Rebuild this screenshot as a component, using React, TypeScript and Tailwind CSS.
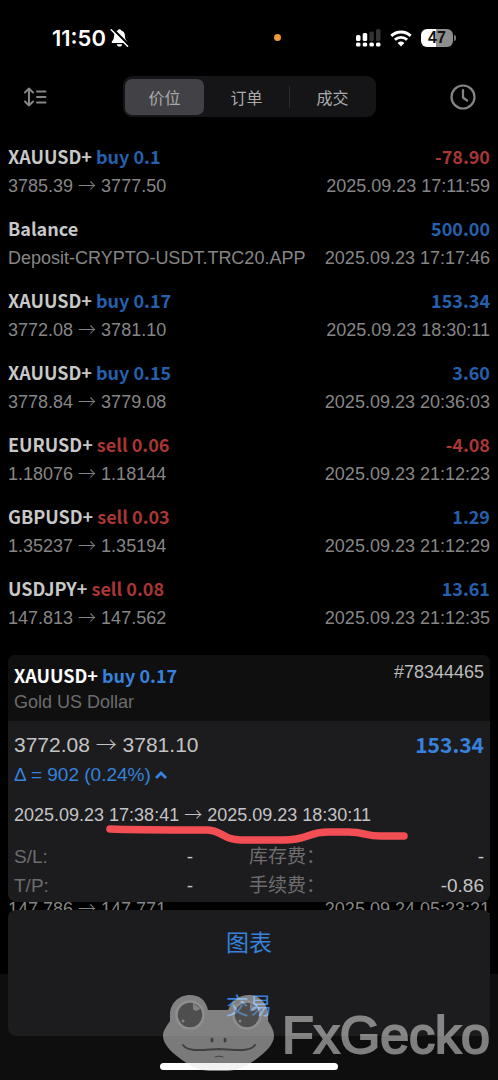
import React, { useState } from 'react'

type Deal = {
  symbol: string
  side?: 'buy' | 'sell'
  volume?: string
  from?: string
  to?: string
  note?: string
  profit: string
  time: string
}

const deals: Deal[] = [
  { symbol: 'XAUUSD+', side: 'buy', volume: '0.1', from: '3785.39', to: '3777.50', profit: '-78.90', time: '2025.09.23 17:11:59' },
  { symbol: 'Balance', note: 'Deposit-CRYPTO-USDT.TRC20.APP', profit: '500.00', time: '2025.09.23 17:17:46' },
  { symbol: 'XAUUSD+', side: 'buy', volume: '0.17', from: '3772.08', to: '3781.10', profit: '153.34', time: '2025.09.23 18:30:11' },
  { symbol: 'XAUUSD+', side: 'buy', volume: '0.15', from: '3778.84', to: '3779.08', profit: '3.60', time: '2025.09.23 20:36:03' },
  { symbol: 'EURUSD+', side: 'sell', volume: '0.06', from: '1.18076', to: '1.18144', profit: '-4.08', time: '2025.09.23 21:12:23' },
  { symbol: 'GBPUSD+', side: 'sell', volume: '0.03', from: '1.35237', to: '1.35194', profit: '1.29', time: '2025.09.23 21:12:29' },
  { symbol: 'USDJPY+', side: 'sell', volume: '0.08', from: '147.813', to: '147.562', profit: '13.61', time: '2025.09.23 21:12:35' },
]

const tabs = ['价位', '订单', '成交']

const heading = "font-['Noto_Sans_CJK_SC',sans-serif] font-bold"

function Arrow() {
  return <span className="font-['Noto_Sans_CJK_SC',sans-serif] font-light leading-[0]">→</span>
}

function StatusBar() {
  return (
    <div className="relative flex h-[76px] items-center justify-between pl-[52px] pr-[42px]">
      <div className="flex items-center gap-1 text-white">
        <span className="font-['Inter',sans-serif] text-[22px] font-semibold leading-6">11:50</span>
        <svg width="19" height="20" viewBox="0 0 19 20" aria-hidden="true">
          <path d="M9.5 1.2c1 0 1.6.6 1.7 1.4 2.4.7 3.6 2.6 3.7 5 .1 3.4.8 4.5 2.3 5.9v1.5H1.8v-1.5c1.5-1.4 2.2-2.5 2.3-5.9.1-2.4 1.3-4.3 3.7-5C7.9 1.8 8.5 1.2 9.5 1.2z" fill="currentColor" />
          <path d="M6.8 16.2h5.4c-.3 1.5-1.3 2.4-2.7 2.4s-2.4-.9-2.7-2.4z" fill="currentColor" />
          <path d="M2.8 1l16 16" stroke="#000" strokeWidth="2.4" />
          <path d="M1.2 1.8l16.4 16.4" stroke="currentColor" strokeWidth="1.5" strokeLinecap="round" />
        </svg>
      </div>
      <span className="absolute left-[55%] top-[34px] size-[7px] rounded-full bg-[#f09a37]" />
      <div className="flex items-center gap-[9px]">
        <svg width="26" height="18" viewBox="0 0 26 18" aria-hidden="true">
          <g fill="#fff">
            <rect x="1" y="6" width="4.5" height="6" rx="1.5" />
            <rect x="7.7" y="4" width="4.5" height="8" rx="1.5" />
            <rect x="1" y="13.5" width="4.5" height="4" rx="1.5" />
            <rect x="7.7" y="13.5" width="4.5" height="4" rx="1.5" />
            <rect x="14.4" y="13.5" width="4.5" height="4" rx="1.5" />
            <rect x="21" y="13.5" width="4.5" height="4" rx="1.5" />
          </g>
          <rect x="14.4" y="2.5" width="4.5" height="9.5" rx="1.5" fill="#333" />
          <rect x="21" y="0" width="4.5" height="12" rx="1.5" fill="#333" />
        </svg>
        <svg width="22" height="17" viewBox="0 0 22 17" fill="none" stroke="#fff" strokeWidth="2.9" aria-hidden="true">
          <path d="M1.3 5.9a14 14 0 0 1 19.4 0" />
          <path d="M4.9 9.8a8.9 8.9 0 0 1 12.2 0" />
          <path d="M11 16.5l-3.4-3.6a4.9 4.9 0 0 1 6.8 0z" fill="#fff" stroke="none" />
        </svg>
        <div className="flex items-center gap-px">
          <span className="flex h-[18px] w-8 items-center justify-center rounded-md bg-linear-to-r from-white from-47% to-[#8e8e8e] to-47% font-['Liberation_Sans',sans-serif] text-[16px] font-bold leading-none text-[#111]">
            47
          </span>
          <span className="h-1.5 w-0.5 rounded-r-full bg-[#777]" />
        </div>
      </div>
    </div>
  )
}

function NavBar() {
  const [active, setActive] = useState(0)

  return (
    <nav className="flex items-center justify-between pl-[23px] pr-[22px] text-[#858585]">
      <button aria-label="Sort" className="w-[26px]">
        <svg width="24" height="20" viewBox="0 0 24 20" fill="none" stroke="currentColor" strokeWidth="2" strokeLinecap="round" strokeLinejoin="round">
          <path d="M6 1.5v17M2 5.5L6 1.5l4 4M2 14.5l4 4 4-4" />
          <path d="M14 4.5h8.5M14 10h8.5M14 15.5h8.5" />
        </svg>
      </button>
      <div role="tablist" className="flex h-[41px] w-[253px] items-center gap-px rounded-[9px] bg-[#151517] p-0.5 font-['Noto_Sans_CJK_SC',sans-serif] text-[16px] text-[#aaa]">
        {tabs.map((tab, i) => (
          <React.Fragment key={tab}>
            {i === 2 && <span className="h-[22px] w-px bg-[#2b2b2e]" />}
            <button
              role="tab"
              aria-selected={active === i}
              onClick={() => setActive(i)}
              className={active === i ? 'h-9 w-[79px] rounded-[7px] bg-[#424246]' : 'h-9 flex-1'}
            >
              {tab}
            </button>
          </React.Fragment>
        ))}
      </div>
      <button aria-label="History" className="w-[26px]">
        <svg width="26" height="26" viewBox="0 0 26 26" fill="none" stroke="currentColor" strokeWidth="2.2" strokeLinecap="round" strokeLinejoin="round">
          <circle cx="13" cy="13" r="11.5" />
          <path d="M13 6v7.5l4 3" />
        </svg>
      </button>
    </nav>
  )
}

function DealRow({ deal }: { deal: Deal }) {
  return (
    <li className="h-[72px] px-2">
      <div className={`flex justify-between text-[18px] leading-7 ${heading}`}>
        <span className="text-[#c8c8c8]">
          {deal.symbol}{' '}
          {deal.side && (
            <span className={deal.side === 'buy' ? 'text-[#2560ae]' : 'text-[#a83634]'}>
              {deal.side} {deal.volume}
            </span>
          )}
        </span>
        <span className={deal.profit.startsWith('-') ? 'text-[#a83634]' : 'text-[#2560ae]'}>{deal.profit}</span>
      </div>
      <div className="flex justify-between text-[18px] leading-8 text-[#868686]">
        {deal.note ? <span>{deal.note}</span> : <span>{deal.from} <Arrow /> {deal.to}</span>}
        <span>{deal.time}</span>
      </div>
    </li>
  )
}

function DealCard() {
  return (
    <section className="relative z-10 mx-2 overflow-hidden rounded-lg bg-[#1c1c1e]">
      <header className="flex justify-between bg-[#0f0f10] px-1.5 pb-[5px] pt-[7px]">
        <div>
          <h2 className={`text-[18px] leading-[26px] text-white ${heading}`}>
            XAUUSD+ <span className="text-[#3682dc]">buy 0.17</span>
          </h2>
          <p className="text-[18px] leading-7 text-[#6c6c6e]">Gold US Dollar</p>
        </div>
        <span className="text-[18px] leading-5 text-[#bcbcbc]">#78344465</span>
      </header>
      <div className="px-1.5 pb-0.5 pt-[9px] text-[#c3c3c5]">
        <div className="flex h-[30px] items-center justify-between">
          <span className="text-[21px]">3772.08 <Arrow /> 3781.10</span>
          <span className={`text-[21px] text-[#3682dc] ${heading}`}>153.34</span>
        </div>
        <button className="flex items-center gap-1 text-[19px] leading-[30px] text-[#3682dc]">
          Δ = 902 (0.24%)
          <svg width="12" height="8" viewBox="0 0 12 8" fill="none" stroke="currentColor" strokeWidth="2.8" aria-hidden="true">
            <path d="M1 7l5-5 5 5" />
          </svg>
        </button>
        <p className="mt-2.5 text-[18px] leading-[30px]">
          2025.09.23 17:38:41 <Arrow /> 2025.09.23 18:30:11
        </p>
        <dl className="mt-3 grid grid-cols-2 text-[19px] leading-[29px]">
          <div className="flex justify-between pr-14">
            <dt className="text-[#6c6c6e]">S/L:</dt>
            <dd>-</dd>
          </div>
          <div className="flex justify-between">
            <dt className="text-[#6c6c6e]">库存费：</dt>
            <dd>-</dd>
          </div>
          <div className="flex justify-between pr-14">
            <dt className="text-[#6c6c6e]">T/P:</dt>
            <dd>-</dd>
          </div>
          <div className="flex justify-between">
            <dt className="text-[#6c6c6e]">手续费：</dt>
            <dd>-0.86</dd>
          </div>
        </dl>
      </div>
      {/* hand drawn marker under the open / close time */}
      <svg className="absolute left-[98px] top-[168px]" width="304" height="24" viewBox="0 0 304 24" fill="none" stroke="#f24e54" strokeWidth="7.5" strokeLinecap="round" aria-hidden="true">
        <path d="M4 6c22 1 58 1 96 1 17 0 16 10 35 10h42c26 0 24-8 45-8h20c18 0 16 4 33 4h23" />
      </svg>
    </section>
  )
}

function Watermark() {
  return (
    <div className="pointer-events-none absolute bottom-2 right-2 z-20 flex items-end gap-2 opacity-50">
      <svg width="112" height="77" viewBox="0 0 112 77" aria-hidden="true">
        <path d="M46 15h20C71 5 77 0 87 0c11 0 19 9 19 20v6c3 5 6 9 6 15 0 9-10 18-22 26-7 5-14 8-24 9H47c-10-1-17-4-24-9C11 59 1 50 1 41c0-6 4-10 7-15v-6C8 9 16 0 28 0c9 0 16 5 18 15z" fill="#e6e6e6" />
        <g fill="#808080" stroke="#fff" strokeWidth="2.5">
          <circle cx="28" cy="20" r="13.5" />
          <circle cx="85" cy="20" r="13.5" />
        </g>
        <g fill="#e6e6e6">
          <path d="M31 8l7 5c-1 3-5 4-7 1z" />
          <circle cx="21" cy="26" r="1.5" />
          <path d="M88 8l7 5c-1 3-5 4-7 1z" />
          <circle cx="78" cy="26" r="1.5" />
        </g>
        <g fill="none" stroke="#707070" strokeWidth="2" strokeLinecap="round">
          <path d="M21 50c5 7 16 5 36 4 20 1 31 3 36-4" />
          <path d="M53 62q4-2 8 0" strokeWidth="1" />
        </g>
        <g fill="#707070">
          <ellipse cx="50" cy="45" rx="1.5" ry="2.5" />
          <ellipse cx="63" cy="45" rx="1.5" ry="2.5" />
        </g>
      </svg>
      <span className="pb-[9px] text-[52px] leading-[56px] text-[#f0f0f0] [-webkit-text-stroke:2px_#f0f0f0]">FxGecko</span>
    </div>
  )
}

export default function App() {
  return (
    <div className="relative min-h-screen bg-black font-['Liberation_Sans','Noto_Sans_CJK_SC',sans-serif]">
      <StatusBar />
      <NavBar />
      <ul className="mt-[25px]">
        {deals.map((deal) => (
          <DealRow key={deal.time} deal={deal} />
        ))}
      </ul>

      {/* tab bar backdrop behind the menu */}
      <div className="absolute inset-x-0 bottom-0 h-[106px] bg-[#0e0e0f]" />

      <div className="relative pb-11 pt-[9px]">
        <DealCard />
        <div className="flex h-2 justify-between px-2 text-[18px] leading-[14px] text-[#868686]">
          <span>147.786 <Arrow /> 147.771</span>
          <span>2025.09.24 05:23:21</span>
        </div>
        <div className="relative z-10 mx-2 flex flex-col rounded-lg bg-[#1c1c1e] text-[23px] text-[#3682dc]">
          <button className="h-[63px] pt-1">图表</button>
          <button className="h-[63px] pt-1">交易</button>
        </div>
      </div>

      <div className="absolute inset-x-0 bottom-2.5 z-10 mx-auto h-[7px] w-[178px] rounded-full bg-white" />
      <Watermark />
    </div>
  )
}
